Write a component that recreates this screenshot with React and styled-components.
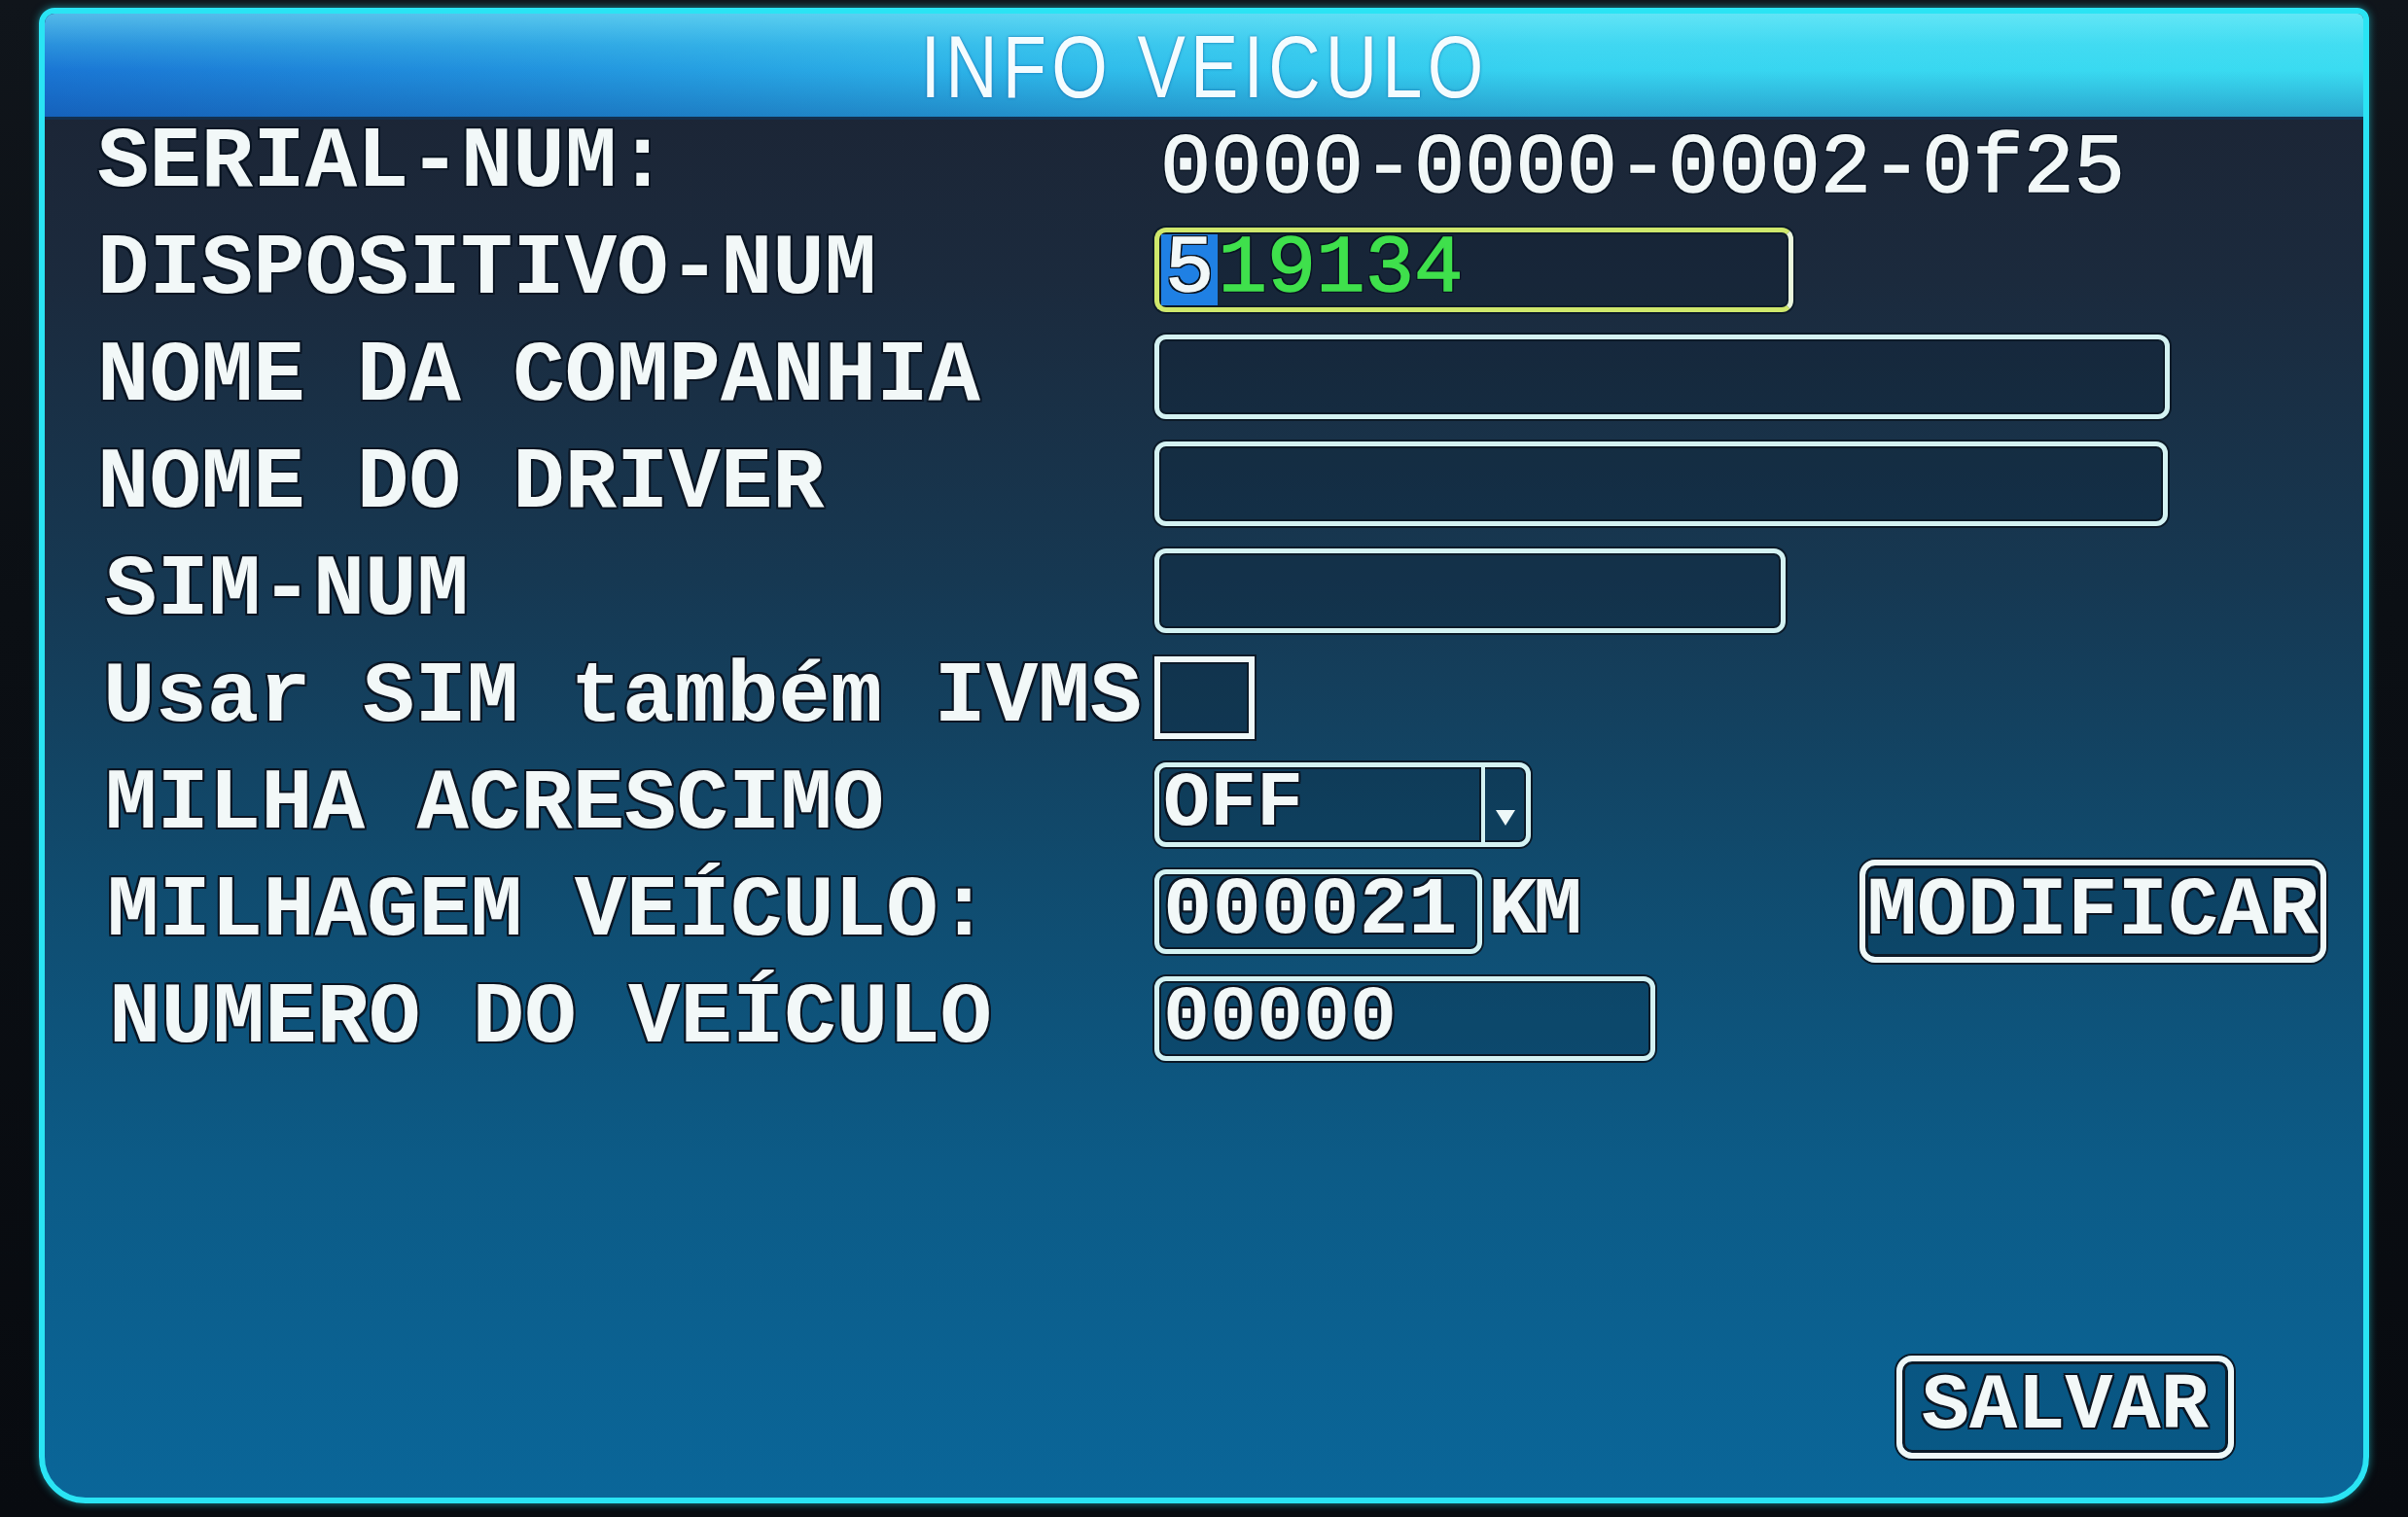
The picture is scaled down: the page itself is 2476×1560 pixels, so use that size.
import styled, { createGlobalStyle } from "styled-components";

const GlobalStyle = createGlobalStyle`
  html, body {
    margin: 0;
    padding: 0;
    background: #0b0f14;
  }
  body {
    width: 2476px;
    height: 1560px;
    overflow: hidden;
  }
`

const MONO = `"Courier New", "Nimbus Mono PS", "FreeMono", "Liberation Mono", monospace`

const Screen = styled.div`
  width: 2476px;
  height: 1560px;
  box-sizing: border-box;
  padding: 8px 40px 14px 40px;
  background: linear-gradient(180deg, #10151b 0%, #0b0f14 40%, #080b10 100%);
  display: flex;
`

const Panel = styled.div`
  flex: 1;
  display: flex;
  flex-direction: column;
  border: 6px solid #2ae4f4;
  border-radius: 16px 12px 48px 48px;
  overflow: hidden;
  box-shadow: 0 0 8px rgba(40, 230, 245, 0.55);
  background: linear-gradient(180deg, #1c2332 0%, #1b2a3d 18%, #163852 38%, #104b6e 58%, #0c5b87 78%, #0a6699 100%);
`

const TitleBar = styled.div`
  height: 106px;
  flex-shrink: 0;
  display: flex;
  align-items: center;
  justify-content: center;
  border-bottom: 3px solid #12304f;
  background:
    linear-gradient(180deg, rgba(130, 240, 250, 0.55) 0%, rgba(90, 225, 245, 0.25) 30%, rgba(0, 0, 0, 0) 55%, rgba(10, 50, 130, 0.3) 100%),
    linear-gradient(90deg, #1a76d4 0%, #2294de 22%, #2fbbea 45%, #37d3f0 65%, #3adcf1 100%);
`

const Title = styled.div`
  font-family: "Liberation Sans", Arial, sans-serif;
  font-size: 86px;
  letter-spacing: 6px;
  color: #f4fcff;
  line-height: 1;
  margin-top: 2px;
  transform: scale(0.86, 1.06);
  text-shadow: 0 0 3px rgba(10, 70, 140, 0.7);
`

const Body = styled.div`
  flex: 1;
  display: flex;
  flex-direction: column;
  padding: 0 38px 40px 54px;
`

const Rows = styled.div`
  display: flex;
  flex-direction: column;
  gap: 22px;
`

const Row = styled.div`
  height: 88px;
  display: flex;
  align-items: center;
`

const outline = `
  -2px -2px 0 #0b1624, 2px -2px 0 #0b1624, -2px 2px 0 #0b1624, 2px 2px 0 #0b1624,
  0 2px 0 #0b1624, 0 -2px 0 #0b1624, 2px 0 0 #0b1624, -2px 0 0 #0b1624
`

const Label = styled.div`
  width: ${ ({ indent }) => 1087 - (indent || 0) }px;
  padding-left: ${ ({ indent }) => indent || 0 }px;
  flex-shrink: 0;
  font-family: ${ MONO };
  font-weight: bold;
  font-size: 89px;
  line-height: 1;
  color: #f2f8f8;
  white-space: pre;
  text-shadow: ${ outline };
`

const Value = styled.div`
  font-family: ${ MONO };
  font-weight: ${ ({ bold }) => bold ? 'bold' : 'normal' };
  font-size: ${ ({ size }) => size || 88 }px;
  line-height: 1;
  color: ${ ({ color }) => color || '#f2f8f8' };
  white-space: pre;
  -webkit-text-stroke: ${ ({ bold }) => bold ? '0' : '1.5px' } ${ ({ color }) => color || '#f2f8f8' };
  text-shadow: ${ outline };
`

const SerialValue = styled(Value)`
  margin-left: 6px;
  margin-top: 14px;
`

const Field = styled.div`
  width: ${ ({ width }) => width }px;
  height: 87px;
  box-sizing: border-box;
  display: flex;
  align-items: stretch;
  border: 5px solid ${ ({ focused }) => focused ? '#cfe86c' : '#d4f2f2' };
  border-right-color: ${ ({ focused }) => focused ? '#eaf6dc' : '#d4f2f2' };
  border-radius: 12px;
  background: rgba(8, 22, 40, 0.18);
  box-shadow: 0 0 0 2px #0c1a28, inset 0 0 0 2px #0c1a28;
  padding: 0 4px;
`

const FieldText = styled.div`
  display: flex;
  align-items: center;
`

const Cursor = styled.span`
  display: flex;
  align-items: center;
  align-self: stretch;
  background: #1f80e4;
  padding: 0 4px 0 4px;
  margin: 2px 0 2px -2px;
`

const Checkbox = styled.div`
  width: 103px;
  height: 85px;
  box-sizing: border-box;
  border: 6px solid #eef8f8;
  box-shadow: 0 0 0 2px #0c1a28, inset 0 0 0 2px #0c1a28;
  background: rgba(8, 22, 40, 0.25);
`

const Select = styled(Field)`
  padding: 0 0 0 4px;
`

const SelectText = styled(FieldText)`
  flex: 1;
`

const SelectArrow = styled.div`
  width: 42px;
  border-left: 4px solid #d4f2f2;
  box-shadow: -2px 0 0 #0c1a28;
  display: flex;
  align-items: flex-end;
  justify-content: center;
  padding-bottom: 16px;
`

const Unit = styled(Value)`
  margin-left: 6px;
  letter-spacing: -4px;
`

const Spacer = styled.div`
  flex: 1;
`

const Button = styled.div`
  height: ${ ({ height }) => height }px;
  padding: 0 ${ ({ pad }) => pad }px;
  box-sizing: border-box;
  display: flex;
  align-items: center;
  justify-content: center;
  border: 6px solid #eef8f8;
  border-radius: 16px;
  box-shadow: 0 0 0 2px #0c1a28, inset 0 0 0 3px #0c1a28;
  background: rgba(0, 20, 40, 0.15);
`

const ButtonText = styled.div`
  font-family: ${ MONO };
  font-weight: bold;
  font-size: ${ ({ size }) => size }px;
  line-height: 1;
  color: #f2f8f8;
  text-shadow: ${ outline };
`

const Footer = styled.div`
  margin-top: auto;
  display: flex;
  justify-content: flex-end;
  padding-right: 95px;
`

const App = () => {
  return (
    <Screen>
      <GlobalStyle/>
      <Panel>
        <TitleBar>
          <Title>INFO VEICULO</Title>
        </TitleBar>
        <Body>
          <Rows>
            <Row>
              <Label>SERIAL-NUM:</Label>
              <SerialValue size={ 87 }>0000-0000-0002-0f25</SerialValue>
            </Row>
            <Row>
              <Label>DISPOSITIVO-NUM</Label>
              <Field width={ 657 } focused>
                <FieldText>
                  <Cursor><Value size={ 84 }>5</Value></Cursor>
                  <Value size={ 84 } color="#3fe04c">19134</Value>
                </FieldText>
              </Field>
            </Row>
            <Row>
              <Label>NOME DA COMPANHIA</Label>
              <Field width={ 1044 }/>
            </Row>
            <Row>
              <Label>NOME DO DRIVER</Label>
              <Field width={ 1042 }/>
            </Row>
            <Row>
              <Label indent={ 8 }>SIM-NUM</Label>
              <Field width={ 649 }/>
            </Row>
            <Row>
              <Label indent={ 6 }>Usar SIM também IVMS</Label>
              <Checkbox/>
            </Row>
            <Row>
              <Label indent={ 8 }>MILHA ACRESCIMO</Label>
              <Select width={ 387 }>
                <SelectText><Value bold size={ 80 }>OFF</Value></SelectText>
                <SelectArrow>
                  <svg width="22" height="18" viewBox="0 0 22 18">
                    <path d="M1 1 L21 1 L11 17 Z" fill="#eef8f8"/>
                  </svg>
                </SelectArrow>
              </Select>
            </Row>
            <Row>
              <Label indent={ 10 }>MILHAGEM VEÍCULO:</Label>
              <Field width={ 337 }>
                <FieldText><Value bold size={ 84 }>000021</Value></FieldText>
              </Field>
              <Unit bold size={ 84 }>KM</Unit>
              <Spacer/>
              <Button height={ 106 } pad={ 2 }>
                <ButtonText size={ 86 }>MODIFICAR</ButtonText>
              </Button>
            </Row>
            <Row>
              <Label indent={ 12 }>NUMERO DO VEÍCULO</Label>
              <Field width={ 515 }>
                <FieldText><Value bold size={ 80 }>00000</Value></FieldText>
              </Field>
            </Row>
          </Rows>
          <Footer>
            <Button height={ 106 } pad={ 20 }>
              <ButtonText size={ 82 }>SALVAR</ButtonText>
            </Button>
          </Footer>
        </Body>
      </Panel>
    </Screen>
  );
};

export default App;
